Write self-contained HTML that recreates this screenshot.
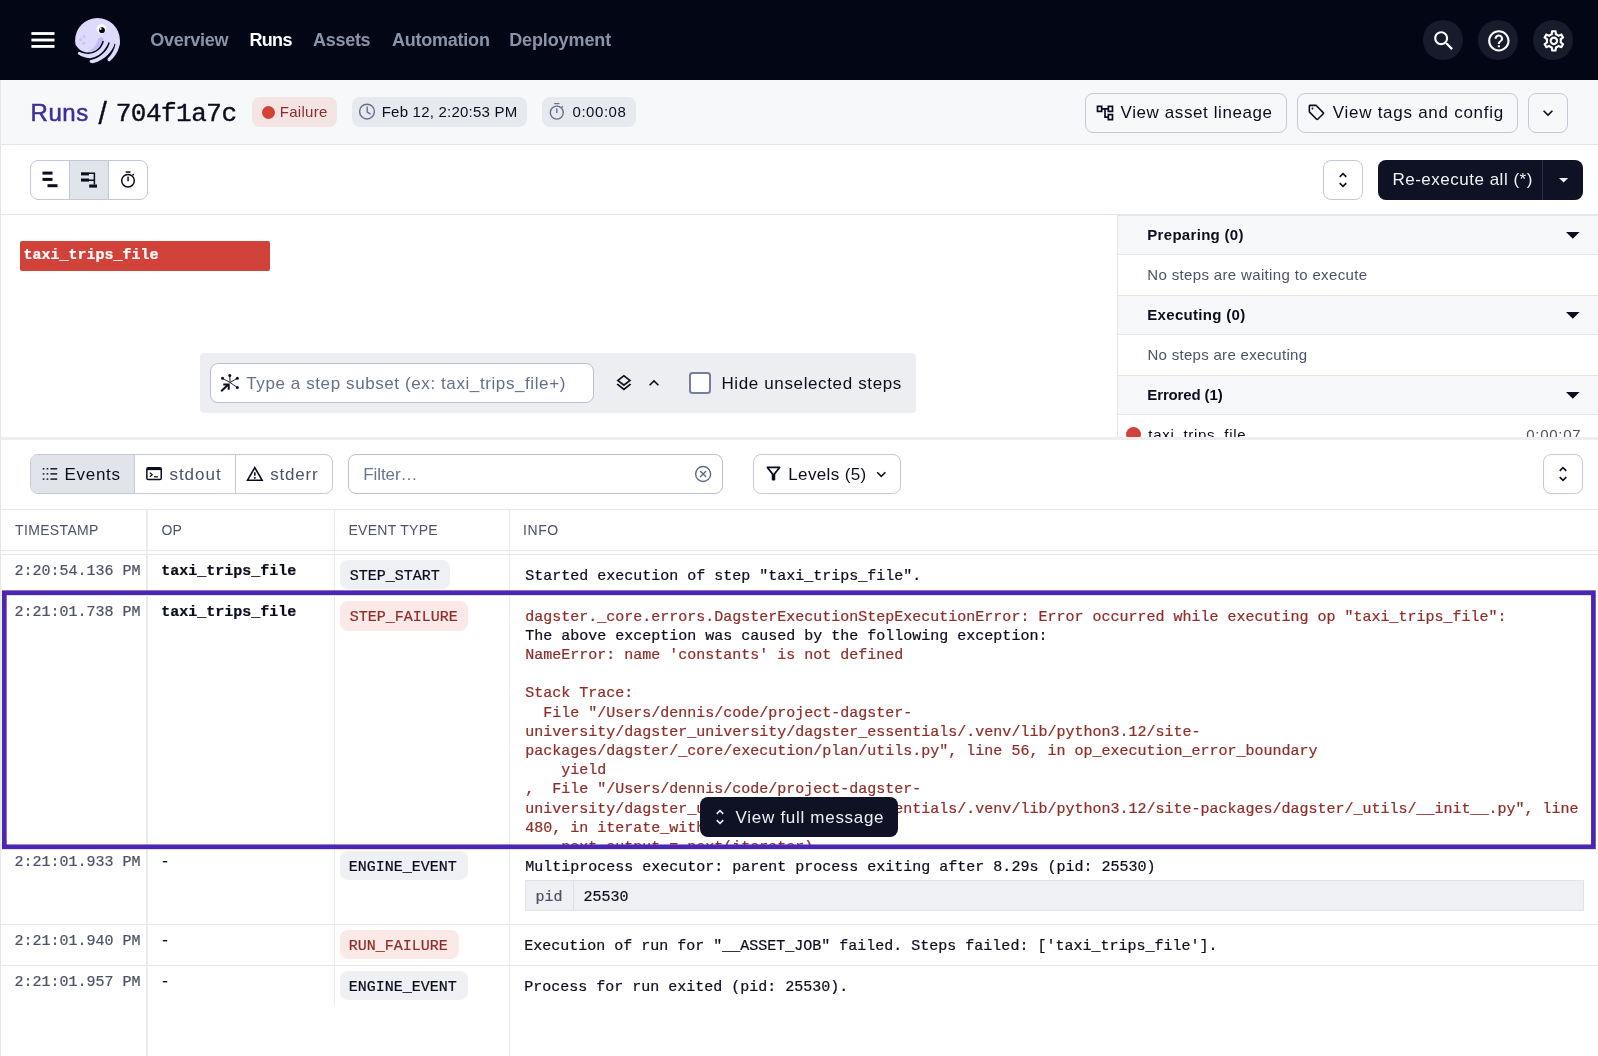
<!DOCTYPE html>
<html lang="en">
<head>
<meta charset="utf-8">
<title>Run 704f1a7c</title>
<style>
*{box-sizing:border-box;margin:0;padding:0}
html,body{width:1598px;height:1056px;overflow:hidden;background:#fff}
body{font-family:"Liberation Sans",sans-serif;color:#0b0e1f;position:relative;font-size:15px}
.a,.t,.m{position:absolute}
.t{white-space:pre;line-height:1;font-family:"Liberation Sans",sans-serif}
.m{white-space:pre;line-height:1;font-family:"Liberation Mono",monospace;font-size:15px;-webkit-text-stroke:0.22px}
.b{font-weight:bold}
svg{position:absolute;overflow:visible}
.circ{position:absolute;top:20px;width:40px;height:40px;border-radius:20px;background:#171b2c}
.tag{position:absolute;border-radius:8px;height:30px;top:97px}
.btn{position:absolute;border:1px solid #c3c9d6;border-radius:8px;background:#fff}
.hl{position:absolute;background:#e6e8ec;height:1px}
.vl{position:absolute;background:#e9ebee;width:1px}
.etag{position:absolute;height:29px;border-radius:8px;background:#eef0f3}
.etag.r{background:#fbe9e8}
</style>
</head>
<body>
<div id="w" style="position:absolute;left:0;top:0;width:1598px;height:1056px;will-change:transform">
<!-- NAV -->
<div class="a" style="left:0;top:0;width:1598px;height:80px;background:#030615"></div>
<svg style="left:0;top:0" width="80" height="80" fill="#fff"><rect x="31.4" y="32.1" width="23.1" height="2.85"/><rect x="31.4" y="38.6" width="23.1" height="2.85"/><rect x="31.4" y="45" width="23.1" height="2.85"/></svg>
<svg style="left:0;top:0" width="140" height="80" viewBox="0 0 140 80">
<defs><clipPath id="lc"><circle cx="97.5" cy="40.4" r="22.4"/></clipPath></defs>
<circle cx="97.5" cy="40.4" r="22.4" fill="#dddafc"/>
<path d="M99.8,37.4 C103,36.8 104.6,39.3 103.2,42.3 C100.8,48.3 95,51.6 87,52 C92,50.2 96,45.8 97.5,40.8 C98,38.8 98.6,37.8 99.8,37.4Z" fill="#c3bdf6"/>
<circle cx="84.1" cy="36.4" r="1.6" fill="#c9c4f7"/><circle cx="80.5" cy="39.6" r="1.6" fill="#c9c4f7"/><circle cx="83.9" cy="43.3" r="1.6" fill="#c9c4f7"/>
<circle cx="101.5" cy="28.8" r="4.8" fill="#fff"/><circle cx="102" cy="30.2" r="2.9" fill="#030615"/><circle cx="100.6" cy="28.9" r="1" fill="#fff"/>
<path d="M102.4,40.8 C101.2,47 95.5,52.5 88,52.5 C83.5,52.5 79,50 76,45.5 L60,45 L60,75 L130,75 L130,47.5 Z" fill="#030615"/>
<path d="M103.8,41.6 L103.8,38 L108.1,39 L108.3,43.1 C105.5,49.5 99.5,57.5 90,58.2 C85,58.2 80.5,56 78.6,54.6 A1.5,1.5 0 0 1 79.4,51.8 C82,53.2 85,53.9 88.2,53.9 C96.5,53.9 102.5,48 103.8,41.6 Z" fill="#dddafc"/>
<path d="M109.6,43.4 L109.6,40 L114.4,41 L114.4,44.3 C113.2,49.5 106,60 93,63.2 C92,63.3 91.2,63 90.3,62.6 A1.4,1.4 0 0 1 90.6,60 C98,58.5 106.5,53 109.6,43.4 Z" fill="#dddafc"/>
<path d="M115.4,44.4 L115.4,41 L119.9,41 L119.8,44 C119,50 115,57 110.5,60.4 A1.6,1.6 0 0 1 107.7,58.6 C111.5,54.5 114.5,49.5 115.4,44.4 Z" fill="#dddafc"/>
</svg>
<div class="t b" style="left:150.30px;top:31.00px;font-size:18px;color:#8a94a9;letter-spacing:-0.264px;">Overview</div>
<div class="t b" style="left:249.50px;top:31.00px;font-size:18px;color:#ffffff;letter-spacing:-0.696px;">Runs</div>
<div class="t b" style="left:313.00px;top:31.00px;font-size:18px;color:#8a94a9;letter-spacing:-0.285px;">Assets</div>
<div class="t b" style="left:391.90px;top:31.00px;font-size:18px;color:#8a94a9;letter-spacing:-0.221px;">Automation</div>
<div class="t b" style="left:509.20px;top:31.00px;font-size:18px;color:#8a94a9;letter-spacing:-0.114px;">Deployment</div>
<div class="circ" style="left:1423px"></div>
<div class="circ" style="left:1478px"></div>
<div class="circ" style="left:1533px"></div>
<svg style="left:1430.85px;top:27.95px" width="25.7" height="25.7" viewBox="0 0 24 24" fill="#fff"><path d="M15.5 14h-.79l-.28-.27C15.41 12.59 16 11.11 16 9.5 16 5.91 13.09 3 9.5 3S3 5.91 3 9.5 5.91 16 9.5 16c1.61 0 3.09-.59 4.23-1.57l.27.28v.79l5 4.99L20.49 19l-4.99-5zm-6 0C7.01 14 5 11.99 5 9.5S7.01 5 9.5 5 14 7.01 14 9.5 11.99 14 9.5 14z"/></svg>
<svg style="left:1485.85px;top:27.95px" width="25.7" height="25.7" viewBox="0 0 24 24" fill="#fff"><path d="M11 18h2v-2h-2v2zm1-16C6.48 2 2 6.48 2 12s4.48 10 10 10 10-4.48 10-10S17.52 2 12 2zm0 18c-4.41 0-8-3.59-8-8s3.59-8 8-8 8 3.59 8 8-3.59 8-8 8zm0-14c-2.21 0-4 1.79-4 4h2c0-1.1.9-2 2-2s2 .9 2 2c0 2-3 1.75-3 5h2c0-2.25 3-2.5 3-5 0-2.21-1.79-4-4-4z"/></svg>
<svg style="left:1540.85px;top:27.95px" width="25.7" height="25.7" viewBox="0 0 24 24" fill="#fff"><path d="M19.43 12.98c.04-.32.07-.64.07-.98 0-.34-.03-.66-.07-.98l2.11-1.65c.19-.15.24-.42.12-.64l-2-3.46c-.09-.16-.26-.25-.44-.25-.06 0-.12.01-.17.03l-2.49 1c-.52-.4-1.08-.73-1.69-.98l-.38-2.65C14.46 2.18 14.25 2 14 2h-4c-.25 0-.46.18-.49.42l-.38 2.65c-.61.25-1.17.59-1.69.98l-2.49-1c-.06-.02-.12-.03-.18-.03-.17 0-.34.09-.43.25l-2 3.46c-.13.22-.07.49.12.64l2.11 1.65c-.04.32-.07.65-.07.98 0 .33.03.66.07.98l-2.11 1.65c-.19.15-.24.42-.12.64l2 3.46c.09.16.26.25.44.25.06 0 .12-.01.17-.03l2.49-1c.52.4 1.08.73 1.69.98l.38 2.65c.03.24.24.42.49.42h4c.25 0 .46-.18.49-.42l.38-2.65c.61-.25 1.17-.59 1.69-.98l2.49 1c.06.02.12.03.18.03.17 0 .34-.09.43-.25l2-3.46c.12-.22.07-.49-.12-.64l-2.11-1.65zm-1.98-1.71c.04.31.05.52.05.73 0 .21-.02.43-.05.73l-.14 1.13.89.7 1.08.84-.7 1.21-1.27-.51-1.04-.42-.9.68c-.43.32-.84.56-1.25.73l-1.06.43-.16 1.13-.2 1.35h-1.4l-.19-1.35-.16-1.13-1.06-.43c-.43-.18-.83-.41-1.23-.71l-.91-.7-1.06.43-1.27.51-.7-1.21 1.08-.84.89-.7-.14-1.13c-.03-.31-.05-.54-.05-.74s.02-.43.05-.73l.14-1.13-.89-.7-1.08-.84.7-1.21 1.27.51 1.04.42.9-.68c.43-.32.84-.56 1.25-.73l1.06-.43.16-1.13.2-1.35h1.39l.19 1.35.16 1.13 1.06.43c.43.18.83.41 1.23.71l.91.7 1.06-.43 1.27-.51.7 1.21-1.07.85-.89.7.14 1.13zM12 8c-2.21 0-4 1.79-4 4s1.79 4 4 4 4-1.79 4-4-1.79-4-4-4zm0 6c-1.1 0-2-.9-2-2s.9-2 2-2 2 .9 2 2-.9 2-2 2z"/></svg>
<!-- HEADER -->
<div class="a" style="left:0;top:80px;width:1598px;height:65px;background:#f7f8fa;border-bottom:1px solid #e2e5ea"></div>
<div class="t" style="left:30.50px;top:100.50px;font-size:24px;color:#3a2f9c;letter-spacing:0.591px;-webkit-text-stroke:0.5px #3a2f9c;">Runs</div>
<div class="t" style="left:98.20px;top:100.50px;font-size:24px;color:#0b0e1f;transform:translate(1.4px,1px) scale(1.25,1.27);transform-origin:50% 56%;-webkit-text-stroke:0.3px;">/</div>
<div class="m" style="left:115.70px;top:101.00px;font-size:26px;color:#0b0e1f;letter-spacing:-0.503px;-webkit-text-stroke:0.4px;">704f1a7c</div>
<div class="tag" style="left:252px;width:85px;background:#f4e5e4"></div>
<div class="a" style="left:262px;top:105.5px;width:13px;height:13px;border-radius:7px;background:#d24236"></div>
<div class="t" style="left:279.80px;top:104.00px;font-size:15px;color:#8c2d2a;letter-spacing:0.265px;">Failure</div>
<div class="tag" style="left:352px;width:175px;background:#e6e9ee"></div>
<svg style="left:0;top:0" width="700" height="140" fill="none" stroke="#64708c" stroke-width="1.4"><circle cx="367" cy="111.6" r="7.4"/><path d="M367.2,106.6 V112 L370.6,114.1"/></svg>
<div class="t" style="left:381.70px;top:104.00px;font-size:15px;color:#0b0e1f;letter-spacing:0.220px;">Feb 12, 2:20:53 PM</div>
<div class="tag" style="left:542px;width:94px;background:#e6e9ee"></div>
<svg style="left:0;top:0" width="700" height="140" fill="none" stroke="#64708c" stroke-width="1.4"><circle cx="556.8" cy="112.6" r="6.5"/><path d="M554.2,103.6 H559.4 M556.8,108.4 V113 M561.6,107.4 L562.8,106.2"/></svg>
<div class="t" style="left:572.50px;top:104.00px;font-size:15px;color:#0b0e1f;letter-spacing:0.549px;">0:00:08</div>
<div class="btn" style="left:1085px;top:93px;width:202px;height:40px;background:none"></div>
<svg style="left:1094.9px;top:102.7px" width="20" height="20" viewBox="0 0 24 24" fill="#0b0e1f"><path d="M22 11V3h-7v3H9V3H2v8h7V8h2v10h4v3h7v-8h-7v3h-2V8h2v3h7zM7 9H4V5h3v4zm10 6h3v4h-3v-4zm0-10h3v4h-3V5z"/></svg>
<div class="t" style="left:1120.60px;top:104.00px;font-size:17px;color:#0b0e1f;letter-spacing:0.589px;">View asset lineage</div>
<div class="btn" style="left:1297px;top:93px;width:221px;height:40px;background:none"></div>
<svg style="left:1307.1px;top:103.4px" width="18.8" height="18.8" viewBox="0 0 24 24" fill="#0b0e1f"><path d="M21.41 11.58l-9-9C12.05 2.22 11.55 2 11 2H4c-1.1 0-2 .9-2 2v7c0 .55.22 1.05.59 1.42l9 9c.36.36.86.58 1.41.58s1.05-.22 1.41-.59l7-7c.37-.36.59-.86.59-1.41s-.23-1.06-.59-1.42zM13 20.01L4 11V4h7v-.01l9 9-7 7.020z"/><circle cx="7" cy="7" r="1.15"/></svg>
<div class="t" style="left:1332.70px;top:104.00px;font-size:17px;color:#0b0e1f;letter-spacing:0.736px;">View tags and config</div>
<div class="btn" style="left:1528px;top:93px;width:40px;height:40px;background:none"></div>
<svg style="left:1538px;top:103px" width="20" height="20" viewBox="0 0 24 24" fill="#0b0e1f"><path d="M16.59 8.59L12 13.17 7.41 8.59 6 10l6 6 6-6z"/></svg>
<!-- TOOLBAR -->
<div class="a" style="left:0;top:214px;width:1598px;height:1px;background:#e2e5ea"></div>
<div class="btn" style="left:30px;top:160px;width:118px;height:40px;overflow:hidden"><div class="a" style="left:38px;top:0;width:40px;height:38px;background:#e1e4ea;border-left:1px solid #c3c9d6;border-right:1px solid #c3c9d6"></div></div>
<svg style="left:0;top:150px" width="170" height="60" viewBox="0 150 170 60" fill="#0b0e1f">
<rect x="42.5" y="171.6" width="10" height="3"/><rect x="42.5" y="177.9" width="10" height="3"/><rect x="47.5" y="184.2" width="10" height="3"/>
<rect x="81" y="172.3" width="8" height="3.1"/><rect x="81" y="178.5" width="8" height="3.1"/><rect x="89.2" y="184.5" width="7.8" height="3.1"/>
<path d="M89,173.3 H94.4 V184.6 M89,180.3 H94.4" fill="none" stroke="#0b0e1f" stroke-width="1.5"/>
<circle cx="128" cy="180.7" r="6.3" fill="none" stroke="#0b0e1f" stroke-width="1.5"/>
<rect x="125.7" y="171.3" width="4.8" height="1.5"/><rect x="127.3" y="176.6" width="1.5" height="4.6"/>
<path d="M132.6,175.2 L133.8,174" stroke="#0b0e1f" stroke-width="1.5" fill="none"/>
</svg>
<div class="btn" style="left:1323px;top:160px;width:40px;height:40px"></div>
<svg style="left:1333px;top:170px" width="20" height="20" viewBox="0 0 24 24" fill="#0b0e1f"><path d="M12 5.83L15.17 9l1.41-1.41L12 3 7.41 7.59 8.83 9 12 5.83zm0 12.34L8.83 15l-1.41 1.41L12 21l4.59-4.59L15.17 15 12 18.17z"/></svg>
<div class="a" style="left:1378px;top:160px;width:205px;height:40px;border-radius:8px;background:#0f1224"></div>
<div class="a" style="left:1542px;top:160px;width:1px;height:40px;background:#2a2e42"></div>
<div class="t" style="left:1392.40px;top:171.00px;font-size:17px;color:#eff1f4;letter-spacing:0.508px;">Re-execute all (*)</div>
<svg style="left:1558.6px;top:177.6px" width="9.2" height="4.6" viewBox="0 0 10 5" fill="#eff1f4"><path d="M0 0l5 5 5-5z"/></svg>
<!-- GANTT -->
<div class="a" style="left:0;top:80px;width:1px;height:976px;background:#e3e6ea;z-index:3"></div>
<div class="a" style="left:20px;top:241px;width:250px;height:30px;border-radius:2px;background:#d1423a"></div>
<div class="m b" style="left:23.60px;top:248.00px;font-size:15px;color:#ffffff;">taxi_trips_file</div>
<div class="a" style="left:200px;top:353px;width:716px;height:60px;border-radius:4px;background:#edeef1"></div>
<div class="btn" style="left:210px;top:363px;width:384px;height:40px;border-color:#b9c0cf"></div>
<svg style="left:0;top:0" width="300" height="420" viewBox="0 0 300 420" fill="none" stroke="#0b0e1f" stroke-width="0.9">
<path d="M230,382.5 L229.8,375.5 M230,382.5 L222.5,378.3 M230,382.5 L237.3,378.3 M230,382.5 L237.3,387.5"/>
<path d="M221.2,391.3 L228.3,384.6" stroke-width="2"/>
<path d="M223.3,384.4 H228.7 V389.8" stroke-width="2"/>
<circle cx="229.8" cy="375.5" r="1.5" fill="#0b0e1f" stroke="none"/><circle cx="222.5" cy="378.3" r="1.5" fill="#0b0e1f" stroke="none"/><circle cx="237.3" cy="378.3" r="1.5" fill="#0b0e1f" stroke="none"/><circle cx="237.3" cy="387.5" r="1.5" fill="#0b0e1f" stroke="none"/>
</svg>
<div class="t" style="left:246.30px;top:375.00px;font-size:17px;color:#64708b;letter-spacing:0.594px;">Type a step subset (ex: taxi_trips_file+)</div>
<svg style="left:614px;top:373px" width="19.8" height="19.8" viewBox="0 0 24 24" fill="#0b0e1f"><path d="M11.99 18.54l-7.37-5.73L3 14.07l9 7 9-7-1.63-1.27-7.38 5.74zM12 16l7.36-5.73L21 9l-9-7-9 7 1.63 1.27L12 16zm0-11.47L17.74 9 12 13.47 6.26 9 12 4.53z"/></svg>
<svg style="left:644px;top:373px" width="20" height="20" viewBox="0 0 24 24" fill="#0b0e1f"><path d="M12 8l-6 6 1.41 1.41L12 10.83l4.59 4.58L18 14z"/></svg>
<div class="a" style="left:689px;top:372px;width:22px;height:22px;border:2px solid #75819c;border-radius:3.5px;background:#fff"></div>
<div class="t" style="left:721.40px;top:375.00px;font-size:17px;color:#0b0e1f;letter-spacing:0.632px;">Hide unselected steps</div>
<!-- RIGHT PANEL -->
<div class="a" style="left:1117px;top:214px;width:481px;height:224px;background:#fff;border-left:1px solid #e2e5ea;border-top:2px solid #e2e5ea"></div>
<div class="a" style="left:1118px;top:216px;width:480px;height:39px;background:#f7f8fa;border-bottom:1px solid #e2e5ea;"></div>
<div class="t b" style="left:1147.30px;top:227.00px;font-size:15px;color:#0b0e1f;letter-spacing:0.306px;">Preparing (0)</div>
<svg style="left:1566.3px;top:232.2px" width="13.6" height="6.8" viewBox="0 0 10 5" fill="#0b0e1f"><path d="M0 0l5 5 5-5z"/></svg>
<div class="a" style="left:1118px;top:295px;width:480px;height:40px;background:#f7f8fa;border-bottom:1px solid #e2e5ea;border-top:1px solid #e2e5ea;"></div>
<div class="t b" style="left:1147.30px;top:307.00px;font-size:15px;color:#0b0e1f;letter-spacing:0.309px;">Executing (0)</div>
<svg style="left:1566.3px;top:312.2px" width="13.6" height="6.8" viewBox="0 0 10 5" fill="#0b0e1f"><path d="M0 0l5 5 5-5z"/></svg>
<div class="a" style="left:1118px;top:375px;width:480px;height:40px;background:#f7f8fa;border-bottom:1px solid #e2e5ea;border-top:1px solid #e2e5ea;"></div>
<div class="t b" style="left:1147.30px;top:387.00px;font-size:15px;color:#0b0e1f;letter-spacing:-0.129px;">Errored (1)</div>
<svg style="left:1566.3px;top:392.2px" width="13.6" height="6.8" viewBox="0 0 10 5" fill="#0b0e1f"><path d="M0 0l5 5 5-5z"/></svg>
<div class="t" style="left:1147.30px;top:267.00px;font-size:15px;color:#4c5369;letter-spacing:0.349px;">No steps are waiting to execute</div>
<div class="t" style="left:1147.50px;top:347.00px;font-size:15px;color:#4c5369;letter-spacing:0.292px;">No steps are executing</div>
<div class="a" style="left:1126px;top:426.5px;width:15px;height:15px;border-radius:8px;background:#d1423a"></div>
<div class="t" style="left:1148.30px;top:427.00px;font-size:15px;color:#0b0e1f;letter-spacing:0.693px;">taxi_trips_file</div>
<div class="t" style="left:1526.30px;top:427.00px;font-size:15px;color:#4c5369;letter-spacing:0.699px;">0:00:07</div>
<div class="a" style="left:0;top:437px;width:1598px;height:3px;background:#eceef1"></div>
<div class="a" style="left:0;top:440px;width:1598px;height:69px;background:#fff"></div>
<!-- LOG TOOLBAR -->
<div class="btn" style="left:30px;top:454px;width:303px;height:40px;overflow:hidden"><div class="a" style="left:0;top:0;width:103px;height:38px;background:#e1e4ea"></div><div class="a" style="left:103px;top:0;width:1px;height:38px;background:#c3c9d6"></div><div class="a" style="left:204px;top:0;width:1px;height:38px;background:#c3c9d6"></div></div>
<svg style="left:0;top:0" width="100" height="500" fill="#0b0e1f"><rect x="42.7" y="468.1" width="1.7" height="1.4"/><rect x="46.6" y="468.1" width="1.7" height="1.4"/><rect x="50.4" y="468.1" width="6.8" height="1.4"/><rect x="42.7" y="473.2" width="1.7" height="1.4"/><rect x="46.6" y="473.2" width="1.7" height="1.4"/><rect x="50.4" y="473.2" width="6.8" height="1.4"/><rect x="42.7" y="478.4" width="1.7" height="1.4"/><rect x="46.6" y="478.4" width="1.7" height="1.4"/><rect x="50.4" y="478.4" width="6.8" height="1.4"/></svg>
<div class="t" style="left:64.60px;top:466.00px;font-size:17px;color:#0b0e1f;letter-spacing:0.666px;">Events</div>
<svg style="left:145.9px;top:467.3px" width="16.1" height="13.4" viewBox="0 0 17 15" preserveAspectRatio="none" fill="none" stroke="#0b0e1f">
<rect x="0.9" y="0.9" width="15.2" height="13.2" rx="1.5" stroke-width="1.6"/><rect x="0.9" y="0.9" width="15.2" height="2.6" fill="#0b0e1f" stroke="none"/>
<path d="M4,6.3 L6.6,8.7 L4,11.1" stroke-width="1.4"/><path d="M8.4,11 H12.6" stroke-width="1.4"/></svg>
<div class="t" style="left:169.40px;top:466.00px;font-size:17px;color:#4c5369;letter-spacing:1.003px;">stdout</div>
<svg style="left:246.2px;top:466.3px" width="17.6" height="15" viewBox="0 0 22 19" fill="#0b0e1f"><path d="M0 19h22L11 0 0 19zm3.47-2L11 3.99 18.53 17H3.47zM10 14h2v2h-2zm0-6h2v4.5h-2z"/></svg>
<div class="t" style="left:270.30px;top:466.00px;font-size:17px;color:#4c5369;letter-spacing:0.761px;">stderr</div>
<div class="btn" style="left:348px;top:454px;width:375px;height:40px;border-color:#b9c0cf"></div>
<div class="t" style="left:363.20px;top:466.00px;font-size:17px;color:#6a7590;letter-spacing:-0.079px;">Filter…</div>
<svg style="left:0;top:0" width="800" height="500" fill="none" stroke="#5d6985" stroke-width="1.35"><circle cx="703.1" cy="474" r="7.5"/><path d="M700.1,471 L706.1,477 M706.1,471 L700.1,477"/></svg>
<div class="btn" style="left:753px;top:454px;width:148px;height:40px"></div>
<svg style="left:762.6px;top:463.4px" width="21" height="21" viewBox="0 0 24 24" fill="#0b0e1f"><path d="M7 6h10l-5.010 6.300L7 6zm-2.750-.390C6.270 8.200 10 13 10 13v6c0 .550.450 1 1 1h2c.550 0 1-.450 1-1v-6s3.720-4.800 5.740-7.390c.510-.660.040-1.610-.790-1.610H5.040c-.830 0-1.300.950-.790 1.610z"/></svg>
<div class="t" style="left:788.30px;top:466.00px;font-size:17px;color:#0b0e1f;letter-spacing:0.358px;">Levels (5)</div>
<svg style="left:872.1px;top:464.5px" width="18.6" height="18.6" viewBox="0 0 24 24" fill="#0b0e1f"><path d="M16.59 8.59L12 13.17 7.41 8.59 6 10l6 6 6-6z"/></svg>
<div class="btn" style="left:1543px;top:454px;width:40px;height:40px"></div>
<svg style="left:1553px;top:464px" width="20" height="20" viewBox="0 0 24 24" fill="#0b0e1f"><path d="M12 5.83L15.17 9l1.41-1.41L12 3 7.41 7.59 8.83 9 12 5.830zm0 12.340L8.830 15l-1.410 1.410L12 21l4.590-4.590L15.170 15 12 18.170z"/></svg>
<!-- TABLE -->
<div class="hl" style="left:0;top:509px;width:1598px"></div>
<div class="hl" style="left:0;top:550px;width:1598px"></div>
<div class="hl" style="left:0;top:554px;width:1598px"></div>
<div class="hl" style="left:0;top:595px;width:1598px"></div>
<div class="hl" style="left:0;top:845px;width:1598px"></div>
<div class="hl" style="left:0;top:924px;width:1598px"></div>
<div class="hl" style="left:0;top:965px;width:1598px"></div>
<div class="vl" style="left:146px;width:2px;top:509px;height:547px;background:#eaecef"></div>
<div class="vl" style="left:334px;top:509px;height:497px"></div>
<div class="vl" style="left:509px;top:509px;height:547px"></div>
<div class="t" style="left:15.00px;top:523.00px;font-size:14px;color:#4c5369;letter-spacing:0.351px;">TIMESTAMP</div>
<div class="t" style="left:161.40px;top:523.00px;font-size:14px;color:#4c5369;letter-spacing:0.210px;">OP</div>
<div class="t" style="left:348.50px;top:523.00px;font-size:14px;color:#4c5369;letter-spacing:0.279px;">EVENT TYPE</div>
<div class="t" style="left:523.10px;top:523.00px;font-size:14px;color:#4c5369;letter-spacing:0.549px;">INFO</div>
<div class="m" style="left:14.60px;top:564.00px;font-size:15px;color:#4c5369;">2:20:54.136 PM</div>
<div class="m b" style="left:161.30px;top:564.00px;font-size:15px;color:#0b0e1f;">taxi_trips_file</div>
<div class="etag" style="left:340px;top:560px;width:110px;height:29px"></div>
<div class="m" style="left:349.80px;top:569.00px;font-size:15px;color:#0b0e1f;">STEP_START</div>
<div class="m" style="left:525.30px;top:569.00px;font-size:15px;color:#0b0e1f;">Started execution of step "taxi_trips_file".</div>
<div class="m" style="left:14.60px;top:605.00px;font-size:15px;color:#4c5369;">2:21:01.738 PM</div>
<div class="m b" style="left:161.30px;top:605.00px;font-size:15px;color:#0b0e1f;">taxi_trips_file</div>
<div class="etag r" style="left:340px;top:601px;width:128px;height:30px"></div>
<div class="m" style="left:349.80px;top:610.00px;font-size:15px;color:#8f2d28;">STEP_FAILURE</div>
<div class="a" style="left:510px;top:596px;width:1081px;height:248.5px;overflow:hidden">
<div class="m" style="left:15.3px;top:14.00px;color:#8f2d28">dagster._core.errors.DagsterExecutionStepExecutionError: Error occurred while executing op "taxi_trips_file":</div>
<div class="m" style="left:15.3px;top:33.00px;color:#0b0e1f">The above exception was caused by the following exception:</div>
<div class="m" style="left:15.3px;top:52.00px;color:#8f2d28">NameError: name 'constants' is not defined</div>
<div class="m" style="left:15.3px;top:90.00px;color:#8f2d28">Stack Trace:</div>
<div class="m" style="left:15.3px;top:110.00px;color:#8f2d28">  File "/Users/dennis/code/project-dagster-</div>
<div class="m" style="left:15.3px;top:129.00px;color:#8f2d28">university/dagster_university/dagster_essentials/.venv/lib/python3.12/site-</div>
<div class="m" style="left:15.3px;top:148.00px;color:#8f2d28">packages/dagster/_core/execution/plan/utils.py", line 56, in op_execution_error_boundary</div>
<div class="m" style="left:15.3px;top:167.00px;color:#8f2d28">    yield</div>
<div class="m" style="left:15.3px;top:186.00px;color:#8f2d28">,  File "/Users/dennis/code/project-dagster-</div>
<div class="m" style="left:15.3px;top:206.00px;color:#8f2d28">university/dagster_university/dagster_essentials/.venv/lib/python3.12/site-packages/dagster/_utils/__init__.py", line</div>
<div class="m" style="left:15.3px;top:225.00px;color:#8f2d28">480, in iterate_with_context</div>
<div class="m" style="left:15.3px;top:244.00px;color:#8f2d28">    next_output = next(iterator)</div>
</div>
<div class="a" style="left:700px;top:797px;width:198px;height:40px;border-radius:8px;background:#0f1224"></div>
<svg style="left:710.2px;top:807px" width="20" height="20" viewBox="0 0 24 24" fill="#eceef1"><path d="M12 5.83L15.17 9l1.41-1.41L12 3 7.41 7.59 8.83 9 12 5.83zm0 12.34L8.83 15l-1.41 1.41L12 21l4.59-4.59L15.17 15 12 18.17z"/></svg>
<div class="t" style="left:735.60px;top:809.00px;font-size:17px;color:#eceef1;letter-spacing:0.704px;">View full message</div>
<svg style="left:0;top:0" width="1598" height="1056"><rect x="4.3" y="592.7" width="1589.1" height="254.1" fill="none" stroke="#4b26b3" stroke-width="4.7"/></svg>
<div class="m" style="left:14.60px;top:855.00px;font-size:15px;color:#4c5369;">2:21:01.933 PM</div>
<div class="m" style="left:160.50px;top:855.00px;font-size:15px;color:#0b0e1f;">-</div>
<div class="etag" style="left:340px;top:851px;width:128px;height:29px"></div>
<div class="m" style="left:348.80px;top:860.00px;font-size:15px;color:#0b0e1f;">ENGINE_EVENT</div>
<div class="m" style="left:525.30px;top:860.00px;font-size:15px;color:#0b0e1f;">Multiprocess executor: parent process exiting after 8.29s (pid: 25530)</div>
<div class="a" style="left:525px;top:880px;width:1059px;height:31px;background:#eef0f3;border:1px solid #e0e3e8"></div>
<div class="a" style="left:573px;top:881px;width:1px;height:29px;background:#dcdfe5"></div>
<div class="m" style="left:535.60px;top:890.00px;font-size:15px;color:#4c5369;">pid</div>
<div class="m" style="left:583.40px;top:890.00px;font-size:15px;color:#0b0e1f;">25530</div>
<div class="m" style="left:14.60px;top:934.00px;font-size:15px;color:#4c5369;">2:21:01.940 PM</div>
<div class="m" style="left:160.50px;top:934.00px;font-size:15px;color:#0b0e1f;">-</div>
<div class="etag r" style="left:340px;top:930px;width:119px;height:29px"></div>
<div class="m" style="left:348.80px;top:939.00px;font-size:15px;color:#8f2d28;">RUN_FAILURE</div>
<div class="m" style="left:524.30px;top:939.00px;font-size:15px;color:#0b0e1f;">Execution of run for "__ASSET_JOB" failed. Steps failed: ['taxi_trips_file'].</div>
<div class="m" style="left:14.60px;top:975.00px;font-size:15px;color:#4c5369;">2:21:01.957 PM</div>
<div class="m" style="left:160.50px;top:975.00px;font-size:15px;color:#0b0e1f;">-</div>
<div class="etag" style="left:340px;top:971px;width:128px;height:29px"></div>
<div class="m" style="left:348.80px;top:980.00px;font-size:15px;color:#0b0e1f;">ENGINE_EVENT</div>
<div class="m" style="left:524.30px;top:980.00px;font-size:15px;color:#0b0e1f;">Process for run exited (pid: 25530).</div>
</div>
</body>
</html>
